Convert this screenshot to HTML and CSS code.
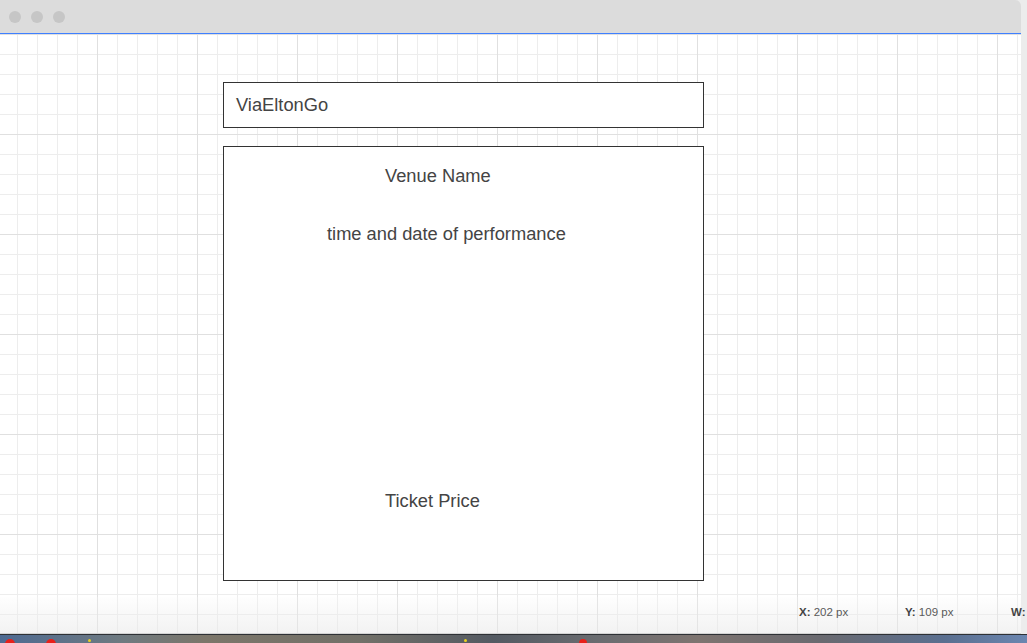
FILE: index.html
```html
<!DOCTYPE html>
<html>
<head>
<meta charset="utf-8">
<link rel="stylesheet" href="styles.css">
</head>
<body>
<div class="screen">
  <div class="window">
    <div class="titlebar">
      <span class="light"></span>
      <span class="light"></span>
      <span class="light"></span>
    </div>
    <div class="canvas">
      <div class="shapes">
        <div class="box header-box">ViaEltonGo</div>
        <div class="box card">
          <div class="label venue">Venue Name</div>
          <div class="label time">time and date of performance</div>
          <div class="label price">Ticket Price</div>
        </div>
      </div>
      <div class="statusbar">
        <span class="stat"><b>X:</b> 202 px</span>
        <span class="stat"><b>Y:</b> 109 px</span>
        <span class="stat last"><b>W:</b></span>
      </div>
    </div>
  </div>
  <div class="side"></div>
</div>
<div class="desktop">
  <span class="dot red d1"></span>
  <span class="dot red d2"></span>
  <span class="dot yellow d3"></span>
  <span class="dot yellow d4"></span>
  <span class="dot red d5"></span>
</div>
</body>
</html>
```

FILE: styles.css
```css
html, body {
  margin: 0;
  padding: 0;
}
body {
  width: 1027px;
  height: 643px;
  overflow: hidden;
  background: #ececec;
  font-family: "Liberation Sans", Arial, sans-serif;
  display: flex;
  flex-direction: column;
}
.screen {
  display: flex;
  height: 634px;
  border-bottom: 1px solid #2e3135;
}
.window {
  width: 1021px;
  flex: none;
  display: flex;
  flex-direction: column;
  position: relative;
  z-index: 1;
}
.side {
  flex: 1;
  background: #ececec;
}
.titlebar {
  height: 33px;
  flex: none;
  background: #dcdcdc;
  border-top-right-radius: 6px;
  display: flex;
  align-items: center;
  padding-left: 9px;
  gap: 10px;
}
.light {
  width: 12px;
  height: 12px;
  border-radius: 50%;
  background: #c6c6c6;
}
.canvas {
  flex: 1;
  display: flex;
  flex-direction: column;
  border-top: 1px solid #3f80ff;
  border-bottom: 1px solid #d4d4d4;
  background-color: #fff;
  background-image:
    linear-gradient(to right, #e0e0e0 1px, transparent 1px),
    linear-gradient(to bottom, #e0e0e0 1px, transparent 1px),
    linear-gradient(to right, #ededed 1px, transparent 1px),
    linear-gradient(to bottom, #ededed 1px, transparent 1px);
  background-size: 100px 100%, 100% 100px, 20px 100%, 100% 20px;
  background-position: 97px 0, 0 0, 17px 0, 0 0;
}
.shapes {
  padding: 48px 0 0 223px;
  display: flex;
  flex-direction: column;
  gap: 18px;
}
.box {
  box-sizing: border-box;
  width: 481px;
  border: 1px solid #333;
  background: #fff;
  color: #444;
  font-size: 18.3px;
}
.header-box {
  height: 46px;
  display: flex;
  align-items: center;
  padding-left: 12px;
}
.card {
  height: 435px;
  padding-top: 18px;
  display: flex;
  flex-direction: column;
}
.label {
  line-height: 22px;
  white-space: nowrap;
}
.venue {
  margin-left: 161px;
}
.time {
  margin-left: 103px;
  margin-top: 36px;
}
.price {
  margin-left: 161px;
  margin-top: 245px;
}
.statusbar {
  margin-top: auto;
  height: 36px;
  display: flex;
  align-items: center;
  padding-left: 799px;
  box-sizing: border-box;
  background: linear-gradient(to bottom, rgba(250,250,250,0.2), rgba(232,232,232,0.55));
  font-size: 11.5px;
  color: #5a5a5a;
  white-space: nowrap;
}
.stat {
  width: 106px;
  flex: none;
  margin-top: -6px;
}
.stat.last {
  width: auto;
}
.stat b {
  color: #444;
}
.desktop {
  flex: 1;
  position: relative;
  background: linear-gradient(to right, #4e6a92 0%, #6f7a80 12%, #7c766a 20%, #727068 35%, #545a62 48%, #6a6c70 58%, #7e7470 68%, #6a6a70 80%, #5a6f90 92%, #6b86b0 100%);
}
.dot {
  position: absolute;
  top: 4px;
  width: 10px;
  height: 10px;
  border-radius: 50%;
}
.red { background: #e8201a; }
.yellow { background: #e8d020; width: 3px; height: 3px; top: 4px; }
.d1 { left: 5px; }
.d2 { left: 46px; }
.d3 { left: 88px; }
.d4 { left: 464px; }
.d5 { left: 579px; width: 8px; height: 8px; }
```
